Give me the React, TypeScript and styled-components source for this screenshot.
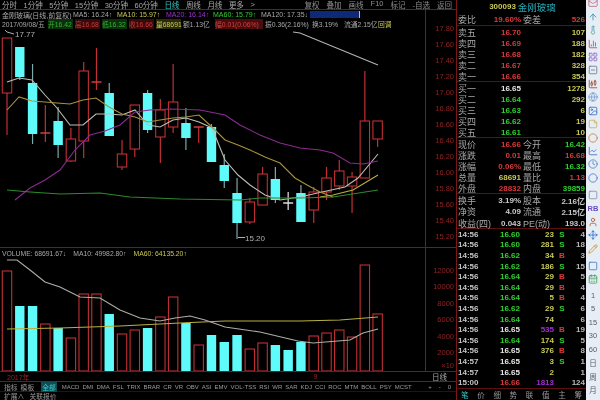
import styled, { createGlobalStyle } from 'styled-components';
import {
  ArrowUp, BarChart3, CalendarDays, CandlestickChart, Circle, Clock, Globe, Image, LayoutGrid, LineChart,
  Mail, Move, Pencil, Square, SquareMinus, StickyNote, Thermometer, User, type LucideIcon,
} from 'lucide-react';

const FONT = '"Liberation Sans", "Noto Sans CJK SC", sans-serif';
const GRID = '#7d1616';
const RED = '#d8393c';
const GREEN = '#2fd02f';
const YELLOW = '#c9c955';
const WHITE = '#e6e6e6';
const GREY = '#a8a8a8';
const PURPLE = '#a02fd0';
const CYAN = '#5ffbfb';

const GlobalStyle = createGlobalStyle`
  html, body { margin: 0; padding: 0; background: #000; }
  * { box-sizing: border-box; }
`;

const Screen = styled.div`
  width: 600px;
  height: 400px;
  display: flex;
  overflow: hidden;
  background: #000;
  font-family: ${FONT};
  filter: blur(0.55px);
`;

/* ---- left pane ---- */

const LeftPane = styled.div`
  width: 457px;
  flex: none;
  display: flex;
  flex-direction: column;
  border-right: 1px solid ${GRID};
`;

const PeriodBar = styled.div`
  height: 10px;
  display: flex;
  align-items: center;
  padding: 0 4px 0 2px;
  gap: 6.5px;
  font-size: 7.5px;
  color: ${GREY};
  white-space: nowrap;
  border-bottom: 1px solid ${GRID};
`;

const Period = styled.span<{ $active?: boolean }>`
  color: ${(p) => (p.$active ? '#35c6c6' : GREY)};
`;

const ToolGroup = styled.div`
  margin-left: auto;
  display: flex;
  gap: 7px;
  color: #8e8e8e;
`;

const UpperBody = styled.div`
  height: 238px;
  display: flex;
  border-bottom: 1px solid ${GRID};
`;

const ChartColumn = styled.div`
  width: 425px;
  flex: none;
  display: flex;
  flex-direction: column;
`;

const InfoRow = styled.div<{ $gap?: number }>`
  height: 9.5px;
  display: flex;
  align-items: center;
  gap: ${(p) => p.$gap ?? 0}px;
  padding-left: 2px;
  font-size: 6.8px;
  white-space: nowrap;
  color: ${GREY};
`;

const MaLabel = styled.span<{ $color: string; $w: number }>`
  width: ${(p) => p.$w}px;
  flex: none;
  color: ${(p) => p.$color};
  font-size: 7px;
`;

const InfoCell = styled.span<{ $w: number; $tone?: string; $bg?: string }>`
  width: ${(p) => p.$w}px;
  flex: none;
  color: ${(p) => p.$tone ?? GREY};
  background: ${(p) => p.$bg ?? 'transparent'};
`;

const ProgressBar = styled.span`
  width: 50px;
  height: 7px;
  flex: none;
  background: #0c2a78;
  border-right: 1px solid #9fc0ff;
`;

const PriceAxis = styled.div<{ $top: number }>`
  flex: 1;
  display: flex;
  flex-direction: column;
  padding-top: ${(p) => p.$top}px;
  border-left: 1px solid ${GRID};
  align-items: flex-end;
  padding-right: 2px;
  font-size: 7.5px;
  color: #8f2323;
`;

const AxisLabel = styled.span<{ $h: number }>`
  height: ${(p) => p.$h}px;
  line-height: ${(p) => p.$h}px;
`;

const PlotSvg = styled.svg`
  display: block;
  flex: none;
`;

const LowerBody = styled.div`
  height: 123px;
  display: flex;
`;

const VolumeHeader = styled.div`
  height: 10px;
  display: flex;
  align-items: center;
  gap: 7px;
  padding-left: 2px;
  font-size: 6.8px;
  color: ${GREY};
  white-space: nowrap;
`;

const VolumeMa = styled.span<{ $color: string }>`
  color: ${(p) => p.$color};
`;

const TimeStrip = styled.div`
  height: 11px;
  display: flex;
  align-items: center;
  border-top: 1px solid ${GRID};
  border-bottom: 1px solid ${GRID};
  font-size: 7px;
  color: #962222;
`;

const YearMark = styled.span`
  margin-left: 7px;
`;

const TickMark = styled.span`
  margin-left: 284px;
`;

const CycleLabel = styled.span`
  margin-left: auto;
  margin-right: 9px;
  color: ${GREY};
  font-size: 7.5px;
`;

const IndicatorBar = styled.div`
  height: 10px;
  display: flex;
  align-items: center;
  gap: 3px;
  padding-left: 4px;
  font-size: 6px;
  color: #9a9a9a;
  white-space: nowrap;
  border-bottom: 1px solid #3a0b0b;
`;

const ModeLabel = styled.span`
  font-size: 6.8px;
`;

const IndicatorTab = styled.span<{ $active?: boolean }>`
  background: ${(p) => (p.$active ? '#0b4f55' : 'transparent')};
  color: ${(p) => (p.$active ? '#3fd0d0' : 'inherit')};
  font-size: ${(p) => (p.$active ? '6.8px' : '6px')};
  padding: ${(p) => (p.$active ? '0 1px' : '0')};
  margin: ${(p) => (p.$active ? '0 2px 0 4px' : '0')};
`;

const ZoomControls = styled.span`
  margin-left: auto;
  margin-right: 5px;
  display: flex;
  gap: 7px;
`;

const ExtraBar = styled.div`
  height: 8px;
  display: flex;
  align-items: center;
  gap: 5px;
  padding-left: 4px;
  font-size: 6.8px;
  color: #9a9a9a;
  white-space: nowrap;
`;

/* ---- quote panel ---- */

const QuotePanel = styled.div`
  width: 129px;
  flex: none;
  display: flex;
  flex-direction: column;
  white-space: nowrap;
`;

const QuoteHeader = styled.div`
  height: 13px;
  display: flex;
  align-items: center;
  justify-content: center;
  gap: 2px;
  padding-left: 2px;
  font-size: 8px;
  font-weight: bold;
  color: ${YELLOW};
`;

const StockName = styled.span`
  color: #25a9b5;
  font-size: 9.5px;
  font-weight: normal;
`;

const Section = styled.div<{ $h: number }>`
  height: ${(p) => p.$h}px;
  display: flex;
  flex-direction: column;
  justify-content: center;
  border-bottom: 1px solid #5e1010;
`;

const QuoteRow = styled.div<{ $h?: number }>`
  height: ${(p) => p.$h ?? 11}px;
  display: grid;
  grid-template-columns: 23px 40px 2px 25px 1fr;
  align-items: center;
  padding: 0 1px 0 1px;
  font-size: 8px;
  font-weight: bold;
`;

const Label = styled.span`
  font-size: 9px;
  font-weight: normal;
  color: ${GREY};
`;

const Value = styled.span<{ $color: string }>`
  color: ${(p) => p.$color};
  text-align: right;
`;

const TradeList = styled.div`
  height: 160px;
  display: flex;
  flex-direction: column;
  justify-content: center;
  border-bottom: 1px solid #5e1010;
`;

const TradeRow = styled.div`
  height: 10.6px;
  display: grid;
  grid-template-columns: 30px 32px 34px 16px 1fr;
  align-items: center;
  padding: 0 1px;
  font-size: 8px;
  font-weight: bold;
`;

const TradeTime = styled.span`
  color: #c4c4c4;
`;

const TradeFlag = styled.span<{ $color: string }>`
  color: ${(p) => p.$color};
  text-align: center;
`;

const DetailTabs = styled.div`
  flex: 1;
  display: flex;
  justify-content: space-between;
  align-items: center;
  padding: 0 4px;
  font-size: 7.5px;
  color: #9a9a9a;
`;

const DetailTab = styled.span<{ $active?: boolean }>`
  color: ${(p) => (p.$active ? '#2fc0c0' : 'inherit')};
`;

/* ---- side toolbar ---- */

const SideBar = styled.div`
  flex: 1;
  display: flex;
  flex-direction: column;
  align-items: center;
  background: #e6edf5;
  font-size: 7.5px;
  color: #5a5a6a;
`;

const SideGroup = styled.div<{ $offset: number }>`
  margin-top: ${(p) => p.$offset}px;
  display: flex;
  flex-direction: column;
  align-items: center;
`;

const SideItem = styled.div<{ $color?: string }>`
  height: 13.45px;
  flex: none;
  display: flex;
  align-items: center;
  justify-content: center;
  color: ${(p) => p.$color ?? '#5a5a6a'};
  font-weight: ${(p) => (p.$color ? 'bold' : 'normal')};
`;

/* ---- data ---- */

const periods = ['分时', '1分钟', '5分钟', '15分钟', '30分钟', '60分钟'];
const tools = ['复权', '叠加', '画线', 'F10', '标记', '-自选', '返回'];
const priceTicks = ['17.80', '17.60', '17.40', '17.20', '17.00', '16.80', '16.60', '16.40', '16.20', '16.00', '15.80', '15.60', '15.40', '15.20'];
const volumeTicks = ['12000', '10000', '8000', '6000', '4000', '2000'];
const indicators = ['MACD', 'DMI', 'DMA', 'FSL', 'TRIX', 'BRAR', 'CR', 'VR', 'OBV', 'ASI', 'EMV', 'VOL-TSS', 'RSI', 'WR', 'SAR', 'KDJ', 'CCI', 'ROC', 'MTM', 'BOLL', 'PSY', 'MCST'];

type Kind = 'r' | 'c' | 'w';
// high, body top, body bottom, low, kind (page y coordinates)
const candles: [number, number, number, number, Kind][] = [
  [38, 38, 93, 135, 'r'], [47, 47, 77, 80, 'c'], [64, 83, 134, 144, 'c'], [105, 133, 133, 142, 'r'],
  [107, 121, 145, 158, 'c'], [128, 139, 161, 162, 'r'], [62, 71, 141, 158, 'r'], [48, 82, 82, 90, 'r'],
  [83, 93, 136, 136, 'c'], [140, 154, 167, 170, 'r'], [105, 105, 149, 157, 'r'], [90, 93, 130, 133, 'c'],
  [99, 110, 137, 163, 'r'], [64, 102, 127, 133, 'r'], [108, 123, 138, 150, 'c'], [127, 127, 127, 143, 'r'],
  [124, 127, 162, 162, 'c'], [154, 165, 181, 188, 'c'], [178, 193, 223, 239, 'c'], [198, 202, 222, 224, 'r'],
  [167, 174, 205, 205, 'r'], [167, 179, 200, 203, 'c'], [192, 203, 203, 210, 'w'], [185, 193, 222, 222, 'c'],
  [187, 192, 210, 223, 'r'], [167, 178, 192, 200, 'r'], [160, 171, 186, 190, 'r'], [172, 177, 186, 213, 'r'],
  [71, 121, 178, 178, 'r'], [121, 121, 139, 147, 'r'],
];

const volumes: [number, Kind][] = [
  [271, 'r'], [306, 'c'], [306, 'c'], [324, 'r'], [328, 'c'], [338, 'r'], [294, 'r'], [294, 'r'], [314, 'c'], [334, 'r'],
  [330, 'r'], [328, 'c'], [317, 'r'], [297, 'r'], [323, 'c'], [345, 'r'], [335, 'c'], [342, 'c'], [335, 'c'], [349, 'r'],
  [343, 'r'], [345, 'c'], [350, 'c'], [342, 'c'], [336, 'r'], [333, 'r'], [330, 'r'], [337, 'r'], [265, 'r'], [314, 'r'],
];

const candleX = (i: number) => 7 + i * 12.78;

const priceLines = [
  { color: '#bdbdb6', points: '7,82 19,78 32,80 45,95 57,108 70,125 83,125 96,114 109,114 122,115 135,110 148,125 160,127 173,120 186,118 199,122 212,128 225,160 238,175 250,185 265,195 280,200 300,197 322,192 345,187 358,178 378,154' },
  { color: '#a8923c', points: '7,110 19,97 32,101 45,102 57,103 70,104 83,100 96,98 109,107 122,114 135,117 148,122 160,120 173,118 186,117 199,115 212,127 225,140 238,145 250,150 265,157 280,163 295,178 307,185 320,192 333,197' },
  { color: '#b8b040', points: '320,197 333,195 353,190 378,175' },
  { color: '#8a2a90', points: '15,200 30,188 45,180 60,170 75,150 90,135 105,131 120,125 135,112 150,110 170,109 200,110 225,115 240,125 260,135 280,143 300,148 320,150 333,153 350,163 363,164 378,161' },
  { color: '#2c8a2c', points: '7,190 30,192 60,194 100,193 130,197 180,199 240,200 260,198 300,198 333,197 378,190' },
  { color: '#b4b4b4', points: '293,32 300,33 378,65' },
];

const volumeLines = [
  { color: '#aeaea6', points: '7,260 17,260 30,270 45,282 60,287 80,297 100,298 120,310 140,318 160,321 175,318 190,316 205,320 225,327 260,332 298,341 313,343 350,340 363,333 378,329' },
  { color: '#b8b040', points: '7,329 60,328 120,326 180,323 225,321 300,321 340,320 378,317' },
];

const sell = [['卖五', '16.70', '107'], ['卖四', '16.69', '188'], ['卖三', '16.68', '182'], ['卖二', '16.67', '328'], ['卖一', '16.66', '354']];
const buy = [['买一', '16.65', '1278', WHITE], ['买二', '16.64', '292', GREEN], ['买三', '16.63', '6', GREEN], ['买四', '16.62', '19', GREEN], ['买五', '16.61', '10', GREEN]];
const stats: [string, string, string, string, string, string][] = [
  ['现价', '16.66', RED, '今开', '16.42', GREEN],
  ['涨跌', '0.01', RED, '最高', '16.68', RED],
  ['涨幅', '0.06%', RED, '最低', '16.32', GREEN],
  ['总量', '68691', YELLOW, '量比', '1.13', RED],
  ['外盘', '28832', RED, '内盘', '39859', GREEN],
];
const finance = [['换手', '3.19%', '股本', '2.16亿'], ['净资', '4.09', '流通', '2.15亿'], ['收益(四)', '0.043', 'PE(动)', '193.0']];
const trades: [string, string, string, string, string][] = [
  ['14:56', '16.60', '23', 'S', '4'], ['14:56', '16.60', '281', 'S', '18'], ['14:56', '16.62', '34', 'B', '3'],
  ['14:56', '16.62', '186', 'S', '15'], ['14:56', '16.64', '29', 'B', '5'], ['14:56', '16.64', '29', 'B', '4'],
  ['14:56', '16.64', '5', 'B', '4'], ['14:56', '16.62', '29', 'S', '6'], ['14:56', '16.64', '74', '', '6'],
  ['14:56', '16.65', '535', 'B', '19'], ['14:56', '16.64', '174', 'S', '5'], ['14:56', '16.65', '376', 'B', '8'],
  ['14:57', '16.65', '3', 'S', '1'], ['14:57', '16.65', '2', '', '1'], ['15:00', '16.66', '1813', '', '124'],
];

const priceColor = (p: string) => (p === '16.65' ? WHITE : p === '16.66' ? RED : GREEN);

const sideTop: [LucideIcon, string][] = [
  [Mail, '#c06a80'], [ArrowUp, '#3f8fb0'], [Thermometer, '#5aa0a8'], [BarChart3, '#c04a60'], [LayoutGrid, '#8a6ac8'],
  [SquareMinus, '#6a7a90'], [CandlestickChart, '#a04a30'], [Globe, '#7aa0d0'], [Image, '#3f70c0'], [StickyNote, '#c8b060'],
  [Circle, '#d08040'], [LineChart, '#3f70c8'], [Clock, '#5a80c0'], [Circle, '#4a80d0'],
];
const sideLower: [LucideIcon, string][] = [[User, '#c05a30'], [Move, '#2f70c8'], [Pencil, '#d09030']];

function PriceChart() {
  return (
    <PlotSvg width={425} height={218} viewBox="0 29 425 218">
      {candles.map(([high, top, bottom, low, kind], i) => {
        const x = candleX(i);
        const color = kind === 'r' ? '#c03034' : kind === 'c' ? '#7fa8a8' : '#e8e8e8';
        return (
          <g key={i}>
            <line x1={x} x2={x} y1={high} y2={low} stroke={color} strokeWidth={1.2} />
            {kind === 'c' ? (
              <rect x={x - 4.7} y={top} width={9.4} height={bottom - top} fill={CYAN} />
            ) : bottom === top ? (
              <line x1={x - 5} x2={x + 5} y1={top} y2={top} stroke={kind === 'r' ? '#e04040' : '#e8e8e8'} strokeWidth={1.4} />
            ) : (
              <rect x={x - 4.7} y={top} width={9.4} height={bottom - top} fill="#000" stroke="#c03034" strokeWidth={1.1} />
            )}
          </g>
        );
      })}
      {priceLines.map((l) => (
        <polyline key={l.points} points={l.points} fill="none" stroke={l.color} strokeWidth={1.1} />
      ))}
      <polyline points="5,30 7,32 14,34" fill="none" stroke="#b0b0b0" strokeWidth={1} />
      <text x={15} y={37} fontSize={8} fill="#b0b0b0" fontFamily={FONT}>17.77</text>
      <line x1={238} x2={245} y1={237.5} y2={237.5} stroke="#b0b0b0" />
      <text x={245} y={241} fontSize={8} fill="#b0b0b0" fontFamily={FONT}>15.20</text>
    </PlotSvg>
  );
}

function VolumeChart() {
  return (
    <PlotSvg width={425} height={113} viewBox="0 258 425 113">
      {volumes.map(([top, kind], i) => {
        const x = candleX(i);
        return kind === 'c' ? (
          <rect key={i} x={x - 4.7} y={top} width={9.4} height={371 - top} fill={CYAN} />
        ) : (
          <rect key={i} x={x - 4.7} y={top} width={9.4} height={371 - top} fill="#000" stroke="#c03034" strokeWidth={1.1} />
        );
      })}
      {volumeLines.map((l) => (
        <polyline key={l.points} points={l.points} fill="none" stroke={l.color} strokeWidth={1.1} />
      ))}
    </PlotSvg>
  );
}

export default function App() {
  return (
    <>
      <GlobalStyle />
      <Screen>
        <LeftPane>
          <PeriodBar>
            {periods.map((p) => <Period key={p}>{p}</Period>)}
            <Period $active>日线</Period>
            <Period>周线</Period>
            <Period>月线</Period>
            <Period>更多</Period>
            <Period>&gt;</Period>
            <ToolGroup>{tools.map((t) => <span key={t}>{t}</span>)}</ToolGroup>
          </PeriodBar>
          <UpperBody>
            <ChartColumn>
              <InfoRow>
                <MaLabel $color={GREY} $w={71}>金刚玻璃(日线,前复权)</MaLabel>
                <MaLabel $color={GREY} $w={44}>MA5: 16.24↑</MaLabel>
                <MaLabel $color={YELLOW} $w={49}>MA10: 15.97↑</MaLabel>
                <MaLabel $color={PURPLE} $w={47}>MA20: 16.14↑</MaLabel>
                <MaLabel $color={GREEN} $w={48}>MA60: 15.79↑</MaLabel>
                <MaLabel $color={GREY} $w={49}>MA120: 17.35↓</MaLabel>
                <ProgressBar />
              </InfoRow>
              <InfoRow $gap={2}>
                <InfoCell $w={44}>2017/09/08/五</InfoCell>
                <InfoCell $w={25} $tone="#35b035" $bg="#0c300c">开16.42</InfoCell>
                <InfoCell $w={25} $tone="#c83a3a" $bg="#3a0a0a">高16.68</InfoCell>
                <InfoCell $w={25} $tone="#35b035" $bg="#0c300c">低16.32</InfoCell>
                <InfoCell $w={25} $tone="#c83a3a" $bg="#3a0a0a">收16.66</InfoCell>
                <InfoCell $w={25} $tone={YELLOW} $bg="#2c2c0a">量68691</InfoCell>
                <InfoCell $w={30}>额1.13亿</InfoCell>
                <InfoCell $w={48} $tone="#d04040" $bg="#4a0c0c">幅0.01(0.06%)</InfoCell>
                <InfoCell $w={45}>振0.36(2.16%)</InfoCell>
                <InfoCell $w={30}>换3.19%</InfoCell>
                <InfoCell $w={32}>流通2.15亿</InfoCell>
                <InfoCell $w={16} $tone={YELLOW}>回调</InfoCell>
              </InfoRow>
              <PriceChart />
            </ChartColumn>
            <PriceAxis $top={11}>
              {priceTicks.map((t) => <AxisLabel key={t} $h={16}>{t}</AxisLabel>)}
            </PriceAxis>
          </UpperBody>
          <LowerBody>
            <ChartColumn>
              <VolumeHeader>
                <span>VOLUME: 68691.67↓</span>
                <span>MA10: 49982.80↑</span>
                <VolumeMa $color={YELLOW}>MA60: 64135.20↑</VolumeMa>
              </VolumeHeader>
              <VolumeChart />
            </ChartColumn>
            <PriceAxis $top={15}>
              {volumeTicks.map((t) => <AxisLabel key={t} $h={16.4}>{t}</AxisLabel>)}
              <AxisLabel $h={10}>×10</AxisLabel>
            </PriceAxis>
          </LowerBody>
          <TimeStrip>
            <YearMark>2017年</YearMark>
            <TickMark>9</TickMark>
            <CycleLabel>日线</CycleLabel>
          </TimeStrip>
          <IndicatorBar>
            <ModeLabel>指标</ModeLabel>
            <ModeLabel>模板</ModeLabel>
            <IndicatorTab $active>全部</IndicatorTab>
            {indicators.map((t) => <IndicatorTab key={t}>{t}</IndicatorTab>)}
            <ZoomControls>
              <span>+</span>
              <span>-</span>
              <span>0</span>
            </ZoomControls>
          </IndicatorBar>
          <ExtraBar>
            <span>扩展∧</span>
            <span>关联报价</span>
          </ExtraBar>
        </LeftPane>

        <QuotePanel>
          <QuoteHeader>300093 <StockName>金刚玻璃</StockName></QuoteHeader>
          <Section $h={13}>
            <QuoteRow $h={12}>
              <Label>委比</Label><Value $color={RED}>19.60%</Value><span />
              <Label>委差</Label><Value $color={RED}>526</Value>
            </QuoteRow>
          </Section>
          <Section $h={56}>
            {sell.map(([name, price, vol]) => (
              <QuoteRow key={name}>
                <Label>{name}</Label><Value $color={RED}>{price}</Value><span /><span />
                <Value $color={YELLOW}>{vol}</Value>
              </QuoteRow>
            ))}
          </Section>
          <Section $h={56}>
            {buy.map(([name, price, vol, color]) => (
              <QuoteRow key={name}>
                <Label>{name}</Label><Value $color={color}>{price}</Value><span /><span />
                <Value $color={YELLOW}>{vol}</Value>
              </QuoteRow>
            ))}
          </Section>
          <Section $h={56}>
            {stats.map(([a, av, ac, b, bv, bc]) => (
              <QuoteRow key={a}>
                <Label>{a}</Label><Value $color={ac}>{av}</Value><span />
                <Label>{b}</Label><Value $color={bc}>{bv}</Value>
              </QuoteRow>
            ))}
          </Section>
          <Section $h={37}>
            {finance.map(([a, av, b, bv]) => (
              <QuoteRow key={a} $h={11.3}>
                <Label>{a}</Label><Value $color="#c8c8c8">{av}</Value><span />
                <Label>{b}</Label><Value $color="#c8c8c8">{bv}</Value>
              </QuoteRow>
            ))}
          </Section>
          <TradeList>
            {trades.map(([time, price, vol, flag, count], i) => (
              <TradeRow key={i}>
                <TradeTime>{time}</TradeTime>
                <Value $color={priceColor(price)}>{price}</Value>
                <Value $color={Number(vol) >= 500 ? PURPLE : YELLOW}>{vol}</Value>
                <TradeFlag $color={flag === 'B' ? RED : GREEN}>{flag}</TradeFlag>
                <Value $color="#b8b8b8">{count}</Value>
              </TradeRow>
            ))}
          </TradeList>
          <DetailTabs>
            <DetailTab $active>笔</DetailTab>
            {['价', '细', '势', '联', '值', '主', '筹'].map((t) => <DetailTab key={t}>{t}</DetailTab>)}
          </DetailTabs>
        </QuotePanel>

        <SideBar>
          <SideGroup $offset={-3.5}>
            {sideTop.map(([Icon, color], i) => (
              <SideItem key={i}><Icon size={10} color={color} strokeWidth={2} /></SideItem>
            ))}
          </SideGroup>
          <SideGroup $offset={3.5}>
            <SideItem><Square size={10} color="#8a90a8" strokeWidth={2} /></SideItem>
            <SideItem $color="#6a4ac0">RB</SideItem>
            {sideLower.map(([Icon, color], i) => (
              <SideItem key={i}><Icon size={10} color={color} strokeWidth={2} /></SideItem>
            ))}
          </SideGroup>
          <SideGroup $offset={3.5}>
            <SideItem><Square size={10} color="#3f80c8" strokeWidth={2} /></SideItem>
            <SideItem><CalendarDays size={10} color="#3fa060" strokeWidth={2} /></SideItem>
          </SideGroup>
          <SideGroup $offset={3}>
            {['1', '5', '15', '30', '60', '日', '周', '月'].map((t) => <SideItem key={t}>{t}</SideItem>)}
          </SideGroup>
        </SideBar>
      </Screen>
    </>
  );
}
